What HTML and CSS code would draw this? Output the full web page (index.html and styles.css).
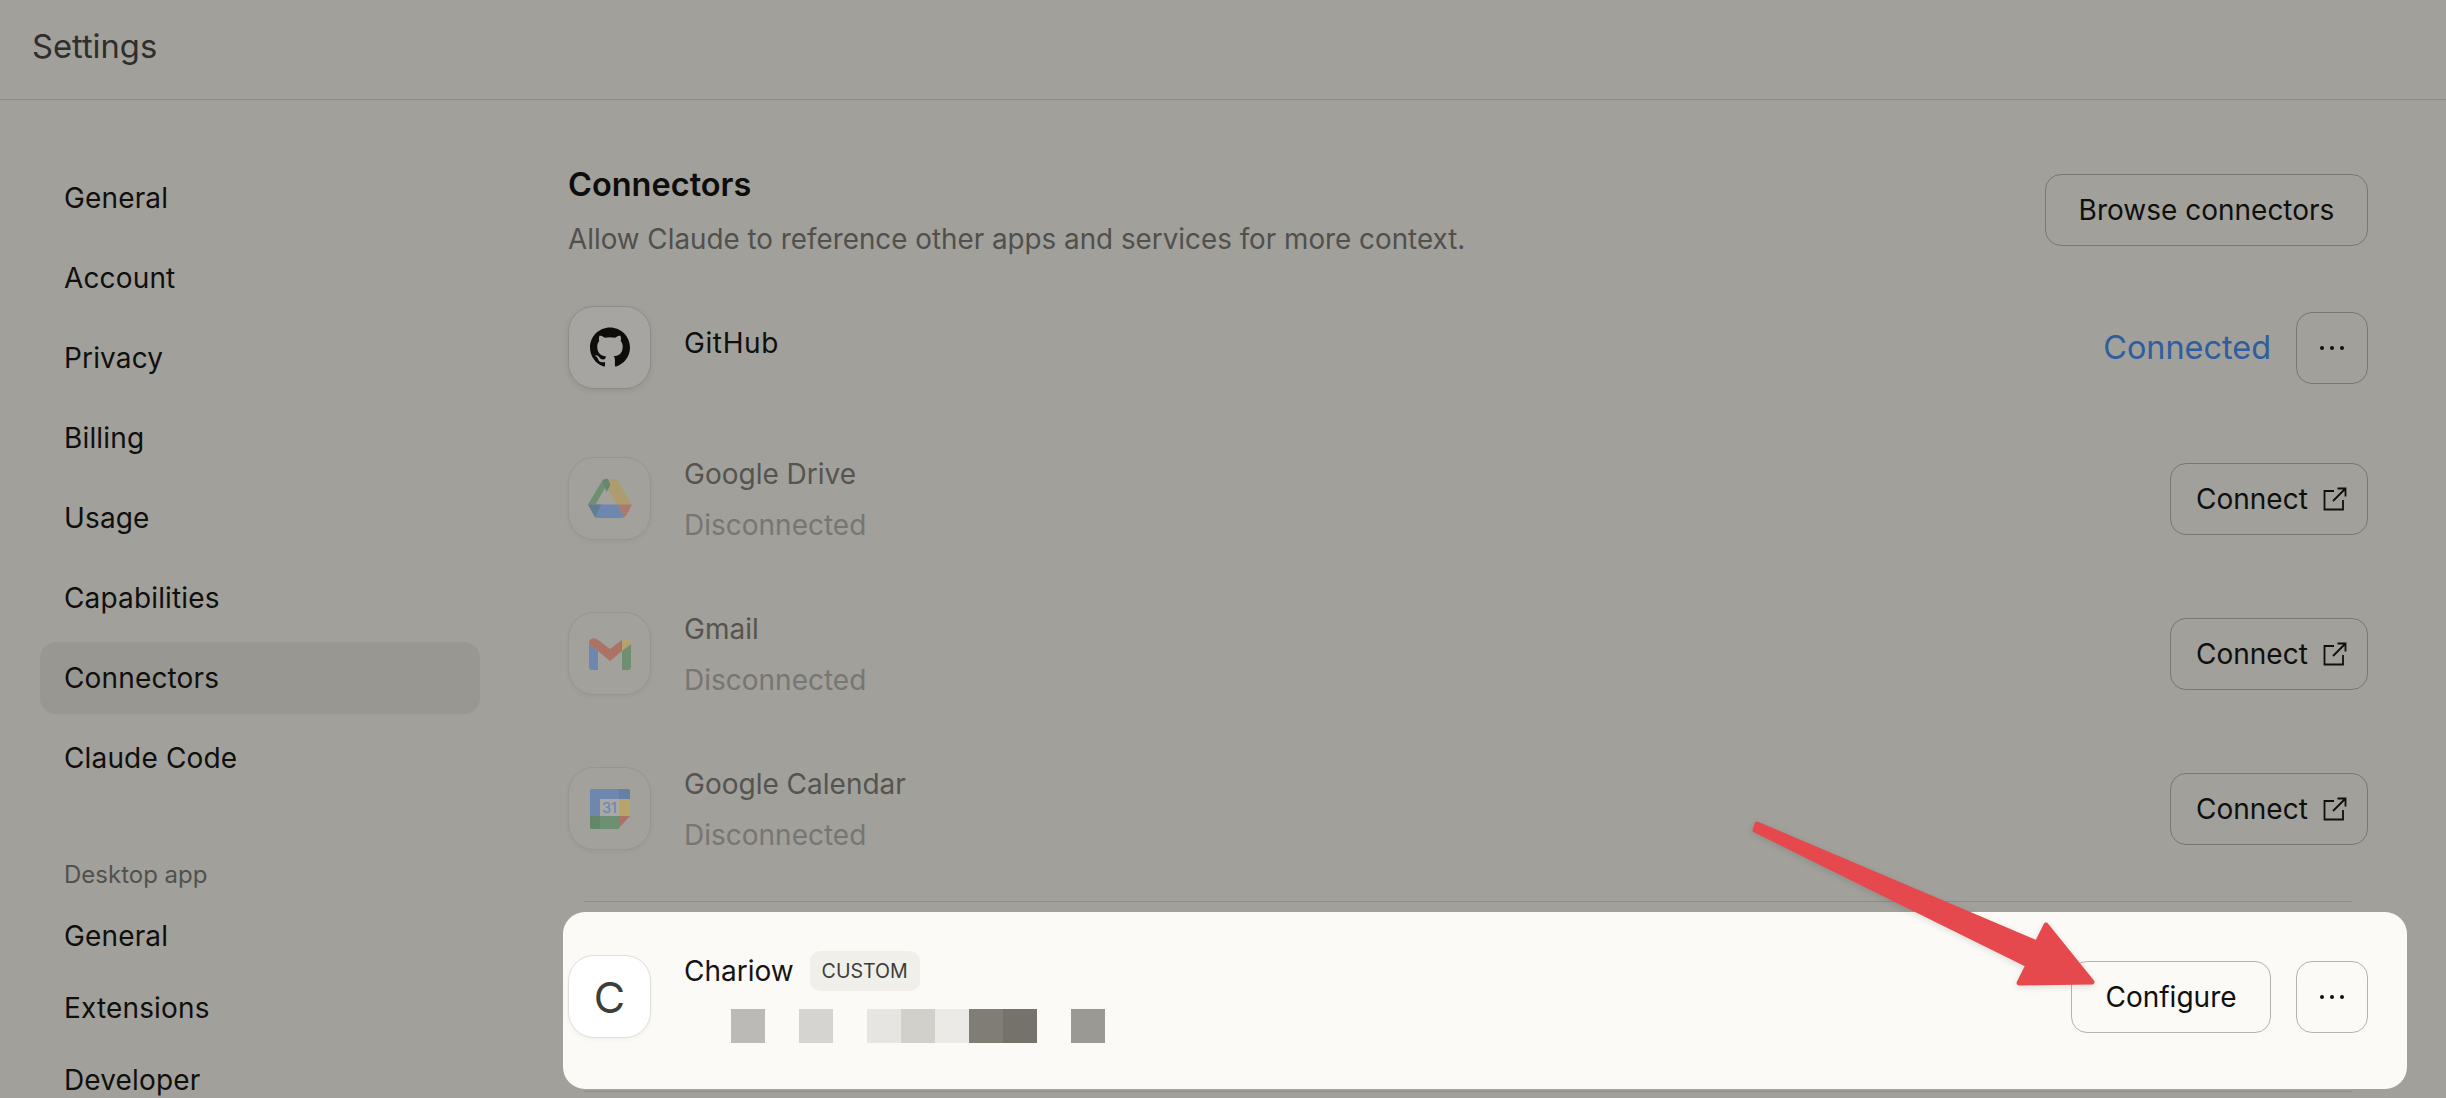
FILE: index.html
```html
<!DOCTYPE html>
<html lang="en">
<head>
<meta charset="utf-8">
<title>Settings</title>
<link rel="stylesheet" href="styles.css">
</head>
<body>
<div class="app">
  <header class="topbar">Settings</header>
  <div class="layout">
    <nav class="sidebar">
      <ul class="nav-group">
        <li class="nav-item">General</li>
        <li class="nav-item">Account</li>
        <li class="nav-item">Privacy</li>
        <li class="nav-item">Billing</li>
        <li class="nav-item">Usage</li>
        <li class="nav-item">Capabilities</li>
        <li class="nav-item nav-item-active">Connectors</li>
        <li class="nav-item">Claude Code</li>
      </ul>
      <div class="nav-label">Desktop app</div>
      <ul class="nav-group nav-group-tight">
        <li class="nav-item">General</li>
        <li class="nav-item">Extensions</li>
        <li class="nav-item">Developer</li>
      </ul>
    </nav>
    <main class="content">
      <div class="section-head">
        <div>
          <h1 class="section-title">Connectors</h1>
          <p class="section-sub">Allow Claude to reference other apps and services for more context.</p>
        </div>
        <button class="btn btn-browse">Browse connectors</button>
      </div>

      <div class="row row-github">
        <div class="tile tile-on">
          <svg class="logo-github" viewBox="0 0 24 24"><path fill="#0d0d0c" d="M12 .297c-6.63 0-12 5.373-12 12 0 5.303 3.438 9.8 8.205 11.385.6.113.82-.258.82-.577 0-.285-.01-1.04-.015-2.04-3.338.724-4.042-1.61-4.042-1.61C4.422 18.07 3.633 17.7 3.633 17.7c-1.087-.744.084-.729.084-.729 1.205.084 1.838 1.236 1.838 1.236 1.07 1.835 2.809 1.305 3.495.998.108-.776.417-1.305.76-1.605-2.665-.3-5.466-1.332-5.466-5.93 0-1.31.465-2.38 1.235-3.22-.135-.303-.54-1.523.105-3.176 0 0 1.005-.322 3.3 1.23.96-.267 1.98-.399 3-.405 1.02.006 2.04.138 3 .405 2.28-1.552 3.285-1.23 3.285-1.23.645 1.653.24 2.873.12 3.176.765.84 1.23 1.91 1.23 3.22 0 4.61-2.805 5.625-5.475 5.92.42.36.81 1.096.81 2.22 0 1.606-.015 2.896-.015 3.286 0 .315.21.69.825.57C20.565 22.092 24 17.592 24 12.297c0-6.627-5.373-12-12-12"/></svg>
        </div>
        <div class="row-text">
          <div class="row-name row-name-github">GitHub</div>
        </div>
        <span class="status-on">Connected</span>
        <button class="btn btn-dots"><svg class="dots" viewBox="0 0 24 6"><circle cx="2" cy="3" r="2"/><circle cx="12" cy="3" r="2"/><circle cx="22" cy="3" r="2"/></svg></button>
      </div>

      <div class="row row-off">
        <div class="tile">
          <svg class="logo-drive" viewBox="0 0 44 40">
            <path fill="#6f8f72" d="M14.5 1.5 Q15.5 0 17.5 0 H22 L7.5 25.5 H0 Q0 25 .5 24.5 Z"/>
            <path fill="#ad9c6d" d="M17 0 H26.5 Q28.5 0 29.5 1.5 L43.7 25.5 H29.5 L15 3 Z"/>
            <path fill="#668770" d="M14.5 1.5 Q15.5 0 17.5 0 H20 L22.5 6 L18.5 13 Z"/>
            <path fill="#ab7a6c" d="M29.5 25.5 H44 L38.5 36 Q37.5 38 36 38 Z"/>
            <path fill="#6d87ae" d="M0 25.5 H29.5 L36 38 Q35 39 33.5 39 H9 Q7 39 6 37 Z"/>
            <path fill="#627c8d" d="M0 25.5 H13 L7.5 37.5 Q6.5 37 6 36 Z"/>
          </svg>
        </div>
        <div class="row-text">
          <div class="row-name">Google Drive</div>
          <div class="row-sub">Disconnected</div>
        </div>
        <button class="btn btn-connect">Connect <svg class="ext" viewBox="0 0 24 24"><path d="M11 4H1.5v18.5H20V13M10 14 22.5 1.5M14.5 1.5h8v8"/></svg></button>
      </div>

      <div class="row row-off">
        <div class="tile">
          <svg class="logo-gmail" viewBox="0 0 42 32">
            <path fill="#6d87ae" d="M0 6 L9 13 V32 H3 Q0 32 0 29 Z"/>
            <path fill="#6f8f72" d="M33 12 L42 6 V29 Q42 32 39 32 H33 Z"/>
            <path fill="#b5a26c" d="M33 4 Q37 -1 40 1 Q42 2 42 6 L33 13 Z"/>
            <path fill="#ab7265" d="M0 6 Q0 2 2 1 Q5 -1 9 2 L21 11 L33 2 V13 L21 23 L9 13 L0 6 Z"/>
          </svg>
        </div>
        <div class="row-text">
          <div class="row-name">Gmail</div>
          <div class="row-sub">Disconnected</div>
        </div>
        <button class="btn btn-connect">Connect <svg class="ext" viewBox="0 0 24 24"><path d="M11 4H1.5v18.5H20V13M10 14 22.5 1.5M14.5 1.5h8v8"/></svg></button>
      </div>

      <div class="row row-off">
        <div class="tile">
          <svg class="logo-cal" viewBox="0 0 40 40">
            <path fill="#6d87ae" d="M2 0 H29 V10 H10 V27 H0 V2 Q0 0 2 0 Z"/>
            <path fill="#6480a6" d="M29 0 H38 Q40 0 40 2 V10 H29 Z"/>
            <path fill="#b8a468" d="M29 10 H40 V27 H29 Z"/>
            <path fill="#6f8f72" d="M10 27 H29 V40 H10 Z"/>
            <path fill="#648669" d="M0 27 H10 V40 H2 Q0 40 0 38 Z"/>
            <path fill="#ab7265" d="M29 27 H40 L29 39 Z"/>
            <rect class="cal-page" x="10" y="10" width="19" height="17"/>
            <text class="cal-num" x="19.5" y="24">31</text>
          </svg>
        </div>
        <div class="row-text">
          <div class="row-name">Google Calendar</div>
          <div class="row-sub">Disconnected</div>
        </div>
        <button class="btn btn-connect">Connect <svg class="ext" viewBox="0 0 24 24"><path d="M11 4H1.5v18.5H20V13M10 14 22.5 1.5M14.5 1.5h8v8"/></svg></button>
      </div>

      <div class="divider divider-top"></div>

      <div class="card">
        <div class="tile tile-card">C</div>
        <div class="card-text">
          <div class="card-title"><span class="card-name">Chariow</span><span class="pill">CUSTOM</span></div>
          <div class="pixels">
            <i class="px p1"></i><i class="px"></i><i class="px p2"></i><i class="px p3"></i><i class="px p4"></i><i class="px p5"></i><i class="px p6"></i><i class="px p7"></i><i class="px p8"></i><i class="px"></i><i class="px p9"></i>
          </div>
        </div>
        <button class="btn btn-card btn-configure">Configure</button>
        <button class="btn btn-card btn-dots"><svg class="dots" viewBox="0 0 24 6"><circle cx="2" cy="3" r="2"/><circle cx="12" cy="3" r="2"/><circle cx="22" cy="3" r="2"/></svg></button>
      </div>

      <div class="divider divider-bottom"></div>
    </main>
  </div>
  <svg class="arrow" viewBox="0 0 2446 1098"><path d="M1757 824 L2037 943 L2046 925 L2092 982 L2019 983 L2028 965 L1755 830 Z"/></svg>
</div>
</body>
</html>
```

FILE: styles.css
```css
* { box-sizing: border-box; }
html, body { margin: 0; padding: 0; height: 100%; }
body {
  background: #a1a09b;
  color: #0f0f0e;
  font-family: Inter, "Liberation Sans", sans-serif;
  font-size: 28px;
  overflow: hidden;
}
.app { position: relative; width: 2446px; height: 1098px; overflow: hidden; }
.topbar {
  height: 100px;
  padding: 0 32px 8px;
  display: flex;
  align-items: center;
  font-size: 32.7px;
  color: #2f2e2c;
  border-bottom: 1px solid #8e8d88;
}
.layout { display: flex; }
.sidebar { width: 568px; flex: none; padding: 62px 0 0 40px; }
.nav-group { list-style: none; margin: 0; padding: 0; width: 440px; display: flex; flex-direction: column; gap: 8px; }
.nav-group-tight { gap: 0; }
.nav-item { height: 72px; padding: 0 24px; display: flex; align-items: center; border-radius: 16px; letter-spacing: .15px; }
.nav-item-active { background: #989791; }
.nav-label { margin-top: 55px; margin-bottom: 1px; padding: 0 24px; height: 50px; display: flex; align-items: center; font-size: 24px; color: #52514e; }
.content { flex: 1; padding: 74px 78px 0 0; min-width: 0; }
.section-head { display: flex; justify-content: space-between; align-items: flex-start; height: 72px; }
.section-title { margin: -9px 0 0; font-size: 32.5px; font-weight: 600; line-height: 40px; color: #0d0d0c; }
.section-sub { margin: 16px 0 0; font-size: 27.8px; line-height: 36px; color: #51504d; }
.btn {
  font: inherit;
  color: #0f0f0e;
  background: transparent;
  border: 1px solid #787773;
  border-radius: 16px;
  height: 72px;
  padding: 0;
  display: inline-flex;
  align-items: center;
  justify-content: center;
  flex: none;
}
.btn-browse { width: 323px; }
.btn-dots { width: 72px; }
.btn-connect { width: 198px; padding: 0 20px 0 25px; justify-content: space-between; }
.row { display: flex; align-items: center; height: 83px; margin-top: 72px; }
.row-github { margin-top: 60px; }
.row-off + .divider { margin-top: 51px; }
.row-github + .row-off { margin-top: 68px; }
.tile {
  width: 83px;
  height: 83px;
  flex: none;
  border-radius: 26px;
  border: 1px solid #979691;
  background: #a2a19c;
  box-shadow: 0 2px 4px rgba(0,0,0,.04);
  display: flex;
  align-items: center;
  justify-content: center;
}
.tile-on { background: #a6a5a2; border-color: #8e8d89; box-shadow: 0 2px 6px rgba(0,0,0,.08); }
.logo-github { width: 40px; height: 40px; margin-top: -2px; }
.logo-drive { width: 44px; height: 40px; }
.logo-gmail { width: 42px; height: 32px; }
.logo-cal { width: 40px; height: 40px; }
.cal-page { fill: #a9a8a4; }
.cal-num { font-size: 14px; fill: #6d87ae; text-anchor: middle; font-weight: 500; }
.row-text { flex: 1; min-width: 0; padding-left: 33px; }
.row-github .row-text { margin-top: -10px; }
.row-name { line-height: 40px; }
.row-name-github { letter-spacing: .6px; }
.row-off .row-name { color: #55544f; }
.row-sub { line-height: 40px; margin-top: 11px; color: #777672; }
.row-off .row-text { margin-top: 1px; }
.status-on { font-size: 32.4px; color: #2f5d9d; margin-right: 25px; }
.dots { width: 24px; height: 6px; fill: #0f0f0e; }
.ext { width: 24px; height: 24px; fill: none; stroke: #0f0f0e; stroke-width: 1.8; }
.divider { height: 1px; background: #8e8d88; margin: 0 16px; }
.card {
  margin: 10px -39px 0 -5px;
  height: 177px;
  padding: 0 39px 8px 5px;
  background: #fbfaf6;
  border-radius: 22px;
  display: flex;
  align-items: center;
}
.tile-card {
  background: #fff;
  border-color: #dfded9;
  box-shadow: 0 2px 4px rgba(0,0,0,.04);
  font-size: 43px;
  color: #3d3d3a;
}
.card-text { flex: 1; min-width: 0; padding-left: 33px; padding-top: 1px; }
.card-title { display: flex; align-items: center; height: 40px; }
.card-name { color: #141413; }
.pill {
  margin-left: 16px;
  width: 110px;
  height: 40px;
  background: #f0efea;
  border-radius: 10px;
  font-size: 19.6px;
  color: #3d3d3a;
  display: flex;
  align-items: center;
  justify-content: center;
}
.pixels { display: flex; margin: 18px 0 0 47px; }
.px { width: 34px; height: 34px; display: block; }
.p1 { background: #bbbab6; }
.p2 { background: #d5d4d0; }
.p3 { background: #fbfaf6; }
.p4 { background: #e6e5e1; }
.p5 { background: #d1d0cb; }
.p6 { background: #ebeae6; }
.p7 { background: #7f7d76; }
.p8 { background: #74726b; }
.p9 { background: #9a9994; }
.btn-card { border-color: #b4b3ae; }
.btn-configure { width: 200px; margin-right: 25px; }
.divider-bottom { margin-top: 2px; }
.arrow {
  position: absolute;
  inset: 0;
  width: 2446px;
  height: 1098px;
  fill: #e5484d;
  stroke: #e5484d;
  stroke-width: 5;
  stroke-linejoin: round;
  filter: drop-shadow(0 2px 3px rgba(0,0,0,.12));
  pointer-events: none;
}
```
